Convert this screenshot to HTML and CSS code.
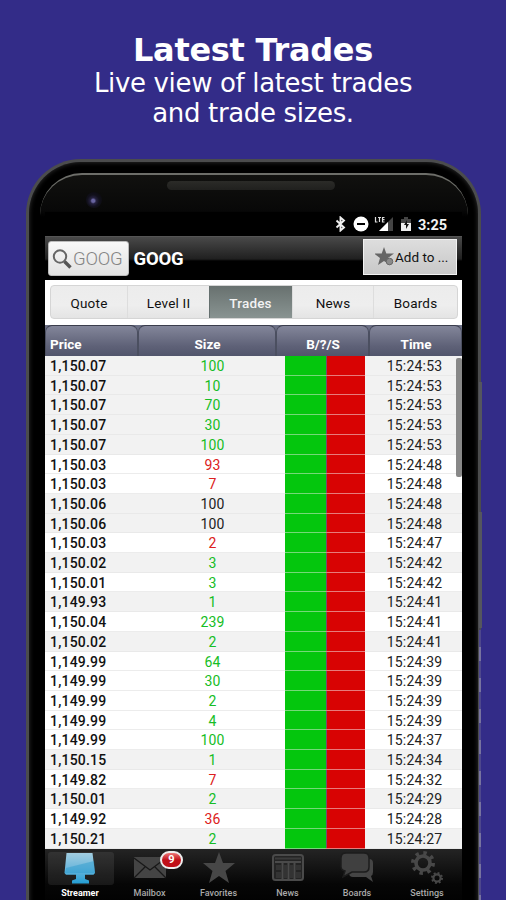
FILE: index.html
```html
<!DOCTYPE html>
<html lang="en">
<head>
<meta charset="utf-8">
<title>Latest Trades</title>
<link rel="stylesheet" href="styles.css">
</head>
<body>
<header class="hero">
  <h1>Latest Trades</h1>
  <p>Live view of latest trades</p>
  <p>and trade sizes.</p>
</header>
<main class="phone">
  <i class="side-key power"></i><i class="side-key volume"></i><i class="edge"></i>
  <div class="face">
    <div class="bezel"><i class="camera"></i><i class="speaker"></i></div>
    <div class="screen">
      <div class="status">
        <svg width="12" height="16" viewBox="0 0 12 16"><path d="M1.500 4.500 9 11.500 5.500 14.500V1.500L9 4.500 1.500 11.500" fill="none" stroke="#eee" stroke-width="1.900"/></svg>
        <svg class="dnd" width="16" height="16" viewBox="0 0 16 16"><circle cx="8" cy="8" r="7.500" fill="#fff"/><path d="M4 8h8" stroke="#000" stroke-width="2"/></svg>
        <svg class="signal" width="20" height="16" viewBox="0 0 20 16"><path d="M19 1v14H5z" fill="#444"/><path d="M14 6v9H5z" fill="#fff"/><path d="M1.500 1v5h2M4 1.500h3M5.500 1v5M10.500 1.500H8.500v4.500h2M8.500 3.700h2" stroke="#ddd" stroke-width="1.200" fill="none"/></svg>
        <svg class="battery" width="10" height="16" viewBox="0 0 10 16"><path d="M3 1h4v2h3v4H0V3h3z" fill="#444"/><path d="M0 7h10v8H0z" fill="#eee"/><path d="M6 4 3 9h2v4l3-5H6z" fill="#111"/></svg>
        <span class="clock">3:25</span>
      </div>
      <div class="titlebar">
        <div class="search">
          <svg width="22" height="22" viewBox="0 0 22 22"><circle cx="9" cy="8.500" r="6.200" fill="none" stroke="#666" stroke-width="2"/><path d="m13.500 13.500 6 6" stroke="#555" stroke-width="3.400"/></svg>
          <span>GOOG</span>
        </div>
        <strong>GOOG</strong>
        <div class="add">
          <svg width="20" height="20" viewBox="0 0 20 20"><path d="m9 0 2.300 6.500H19l-6 4.500 2 7L9 14 3 18l2-7-6-4.500h7.700z" fill="#666"/><circle cx="14.500" cy="14.500" r="3.300" fill="#8b8b8b" stroke="#666"/></svg>
          <span>Add to ...</span>
        </div>
      </div>
      <div class="tabs-wrap">
        <nav class="tabs"><span>Quote</span><span>Level II</span><span class="on">Trades</span><span>News</span><span>Boards</span></nav>
      </div>
      <div class="head"><span>Price</span><span>Size</span><span>B/?/S</span><span>Time</span></div>
      <section class="rows" id="rows"></section>
      <nav class="dock">
        <div class="item on">
          <svg width="36" height="33" viewBox="0 0 36 33"><defs><linearGradient id="blue" x2="0" y2="1"><stop stop-color="#a2cde0"/><stop offset=".5" stop-color="#6db7dc"/><stop offset="1" stop-color="#249ed4"/></linearGradient></defs><path d="M4.500 2h26l2.500 20-1.500 1.800H23V28l4 1.500V32.500H10V29.500l4-1.500v-4.200H4L2.500 22z" fill="url(#blue)"/><path d="M32 10 33 22H3L4 17z" fill="#2898cc" opacity=".45"/></svg>
          <span>Streamer</span></div>
        <div class="item">
          <svg width="36" height="33" viewBox="0 0 36 33"><path d="M2 6h32v21H2z" fill="#444"/><path d="m2 7 16 12L34 7M2 27l11-11M34 27 23 16" fill="none" stroke="#181818" stroke-width="1.300"/></svg>
          <b class="badge">9</b><span>Mailbox</span></div>
        <div class="item">
          <svg width="36" height="33" viewBox="0 0 36 33"><path d="m18 1 4 11h12l-9.500 8L28 32l-10-7L8 32l3.500-12L2 12h12z" fill="#474747"/></svg>
          <span>Favorites</span></div>
        <div class="item">
          <svg width="36" height="33" viewBox="0 0 36 33"><rect x="3" y="4" width="30" height="25" rx="2.500" fill="#242424" stroke="#4a4a4a" stroke-width="2"/><path d="M5 7.500h26" stroke="#3b3b3b" stroke-width="2"/><path d="M5 11h26M12.500 11v17M18.500 11v17M24.500 11v17" stroke="#4a4a4a" stroke-width="2"/><path d="M6 14h5v5H6zm0 7h5v6H6zm8-7h3v13h-3zm6 0h3v13h-3zm6 0h5v5h-5zm0 7h5v6h-5z" fill="#333"/></svg>
          <span>News</span></div>
        <div class="item">
          <svg width="36" height="33" viewBox="0 0 36 33"><path d="M10 8h20q4 0 4 4v9q0 3-2 4l2 6-7-5H14q-4 0-4-4z" fill="#454545"/><path d="M7 2h18q5 0 5 5v9q0 5-5 5H13l-9 5 2-6q-4-1-4-4V7q0-5 5-5z" fill="#404040" stroke="#1c1c1c" stroke-width="1.500"/></svg>
          <span>Boards</span></div>
        <div class="item">
          <svg width="36" height="33" viewBox="0 0 36 33"><circle cx="14" cy="12" r="7" fill="none" stroke="#484848" stroke-width="3.600"/><circle cx="14" cy="12" r="10" fill="none" stroke="#484848" stroke-width="4" stroke-dasharray="3.400 4.454"/><circle cx="28" cy="27" r="3.600" fill="none" stroke="#484848" stroke-width="2.200"/><circle cx="28" cy="27" r="5" fill="none" stroke="#484848" stroke-width="2" stroke-dasharray="1.900 2.027"/></svg>
          <span>Settings</span></div>
      </nav>
    </div>
  </div>
</main>
<script src="script.js"></script>
</body>
</html>
```
FILE: styles.css
```css
* { box-sizing: border-box; }
body { margin: 0; width: 506px; height: 900px; overflow: hidden; background: #332c88; font-family: Roboto, sans-serif; display: flex; flex-direction: column; align-items: center; }
.hero { height: 159px; flex: none; padding-top: 32px; text-align: center; color: #fff; font-family: "DejaVu Sans", sans-serif; }
.hero h1 { margin: 0; font-size: 32px; line-height: 36px; letter-spacing: -.3px; }
.hero p { margin: 0; font-size: 26px; line-height: 30px; letter-spacing: -.34px; }
.phone { position: relative; width: 455px; height: 780px; flex: none; align-self: flex-start; margin-left: 26px; padding: 11px 10px 0 11px; background: #000; border: 3px solid #4b4c4d; border-bottom: 0; border-radius: 55px 55px 0 0; box-shadow: inset 0 0 5px #333; }
.side-key { position: absolute; right: -4px; width: 3px; background: #55565e; }
.power { top: 220px; height: 58px; }
.volume { top: 350px; height: 116px; }
.edge { position: absolute; right: -3px; top: 468px; bottom: 0; width: 2px; background: repeating-linear-gradient(#4d478c 0 17px, #77739f 17px 31px); }
.face { width: 428px; padding: 0 5px; border-top: 2px solid #6d6e69; border-radius: 42px 42px 0 0; background: linear-gradient(#11110f, #080808 35px, #000 42px); }
.bezel { height: 37px; position: relative; }
.camera { position: absolute; left: 41px; top: 17px; width: 16px; height: 16px; border-radius: 50%; background: radial-gradient(circle at 45% 55%, #6864a0 0 1.5px, #25213f 3px, #11101b 6px, #080808); }
.speaker { position: absolute; left: 122px; top: 6px; width: 168px; height: 9px; border-radius: 5px; background: linear-gradient(#2b2b28, #20201e); }
.screen { width: 417px; }
.status { height: 24px; background: #000; display: flex; align-items: center; padding-left: 290px; color: #f2f2f2; }
.dnd { margin-left: 6px; } .signal { margin-left: 5px; } .battery { margin-left: 7px; }
.clock { font-size: 14.500px; font-weight: 700; margin-left: 7px; padding-top: 2px; }
.titlebar { height: 44px; border-top: 1px solid #555; background: linear-gradient(#494949, #202020 22px, #000 24px); display: flex; align-items: center; padding: 0 5px 0 3px; color: #fff; }
.search { height: 35px; width: 81px; background: linear-gradient(#f8f8f8, #e2e2e2); border: 1px solid #bbb; border-radius: 3px; display: flex; align-items: center; padding-left: 2px; color: #858585; font-size: 18.500px; font-weight: 300; letter-spacing: -.2px; }
.search svg { flex: none; }
.titlebar strong { font-size: 18.500px; margin-left: 4.500px; letter-spacing: -.2px; padding-top: 1px; }
.add { margin-left: auto; margin-top: -3px; height: 36px; width: 94px; background: linear-gradient(#ddd, #c8c8c8); border: 1px solid #f2f2f2; display: flex; align-items: center; padding-left: 11px; color: #111; font-size: 13.500px; white-space: nowrap; }
.tabs-wrap { height: 45px; padding: 5px 4px 6px 5px; background: #fff; }
.tabs { height: 34px; display: grid; grid-template-columns: 76px 82px 83px 81px 84px; background: linear-gradient(#ececec, #eee 60%, #e4e4e4); border: 1px solid #d5d5d5; border-radius: 4px; overflow: hidden; color: #111; font-size: 13.500px; line-height: 34px; text-align: center; letter-spacing: .2px; }
.tabs span + span { border-left: 1px solid #ddd; }
.tabs .on { background: linear-gradient(#68716f, #8b9694); color: #f3f3f3; font-weight: 500; border-left-color: #65706f; text-indent: -1px; }
.head { height: 31px; display: grid; grid-template-columns: 93px 138px 93px 93px; background: #6b6f84; color: #fff; font-size: 13.500px; font-weight: 700; line-height: 37px; text-align: center; }
.head span { border: 1px solid #3a3d4c; border-color: #3a3d4c #4b4f60 #3a3d4c; border-bottom: 0; border-radius: 7px 7px 0 0; background: linear-gradient(#83869a, #5e6177 55%, #494d64); }
.head span:first-child { text-align: left; padding-left: 4px; }
.head span:not(:first-child) { padding-left: 1px; }
.rows { position: relative; height: 492.500px; display: grid; grid-template-rows: repeat(25, minmax(0, 1fr)); background: #fff; }
.rows::after { content: ""; position: absolute; right: 0; top: 2px; width: 6px; height: 119px; background: #888; border-radius: 2px; }
.row { display: grid; grid-template-columns: 95px 145px 41px 39px 97px; grid-template-rows: 100%; font-size: 14px; line-height: 20.500px; color: #222; text-align: center; letter-spacing: .2px; border-bottom: 1px solid #ececec; }
.row.shade { background: #f2f2f2; border-color: #e9e9e9; }
.row span:last-child { padding-left: 2px; }
.row .price { text-align: left; padding-left: 5px; font-weight: 500; color: #111; }
.row .up { color: #16bd25; } .row .down { color: #dc2020; }
.row i { margin-bottom: -1px; border-bottom: 1px solid #75d878; }
.row .buy { background: #04c60d; }
.row .sell { background: #d80303; border-color: #e77b7b; box-shadow: inset 1px 0 #725070; }
.dock { height: 60px; display: grid; grid-template-columns: 70px 69px 69px 69px 70px 70px; background: linear-gradient(#242424, #060606 35px, #000); }
.item { position: relative; display: flex; flex-direction: column; align-items: center; color: #aaa; font-size: 9px; font-weight: 500; height: 51px; }
.item svg { height: 33px; margin-top: 2px; flex: none; }
.item span { line-height: 11px; margin-top: 4px; }
.item.on { color: #fff; font-weight: 700; }
.item.on::before { content: ""; position: absolute; inset: 3px 1px 15px 3px; border-radius: 3px; background: #ffffff14; }
.item.on svg { position: relative; }
.badge { position: absolute; left: 45px; top: 2px; width: 23px; height: 18px; border: 2px solid #eee; border-radius: 10px; background: linear-gradient(#e77, #c01018 50%); color: #fff; font-size: 11px; line-height: 14px; text-align: center; }
```
FILE: script.js
```js
const trades = `1,150.07 100 u 15:24:53
1,150.07 10 u 15:24:53
1,150.07 70 u 15:24:53
1,150.07 30 u 15:24:53
1,150.07 100 u 15:24:53
1,150.03 93 d 15:24:48
1,150.03 7 d 15:24:48
1,150.06 100 n 15:24:48
1,150.06 100 n 15:24:48
1,150.03 2 d 15:24:47
1,150.02 3 u 15:24:42
1,150.01 3 u 15:24:42
1,149.93 1 u 15:24:41
1,150.04 239 u 15:24:41
1,150.02 2 u 15:24:41
1,149.99 64 u 15:24:39
1,149.99 30 u 15:24:39
1,149.99 2 u 15:24:39
1,149.99 4 u 15:24:39
1,149.99 100 u 15:24:37
1,150.15 1 u 15:24:34
1,149.82 7 d 15:24:32
1,150.01 2 u 15:24:29
1,149.92 36 d 15:24:28
1,150.21 2 u 15:24:27`.split("\n").map(line => line.split(" "));
const tone = { u: "up", d: "down", n: "" };
let shade = false, last = "";
document.getElementById("rows").innerHTML = trades.map(([price, size, side, time]) => {
  if (price !== last) { shade = !shade; last = price; }
  return `<div class="row${shade ? " shade" : ""}"><span class="price">${price}</span><span class="${tone[side]}">${size}</span><i class="buy"></i><i class="sell"></i><span>${time}</span></div>`;
}).join("");
```
